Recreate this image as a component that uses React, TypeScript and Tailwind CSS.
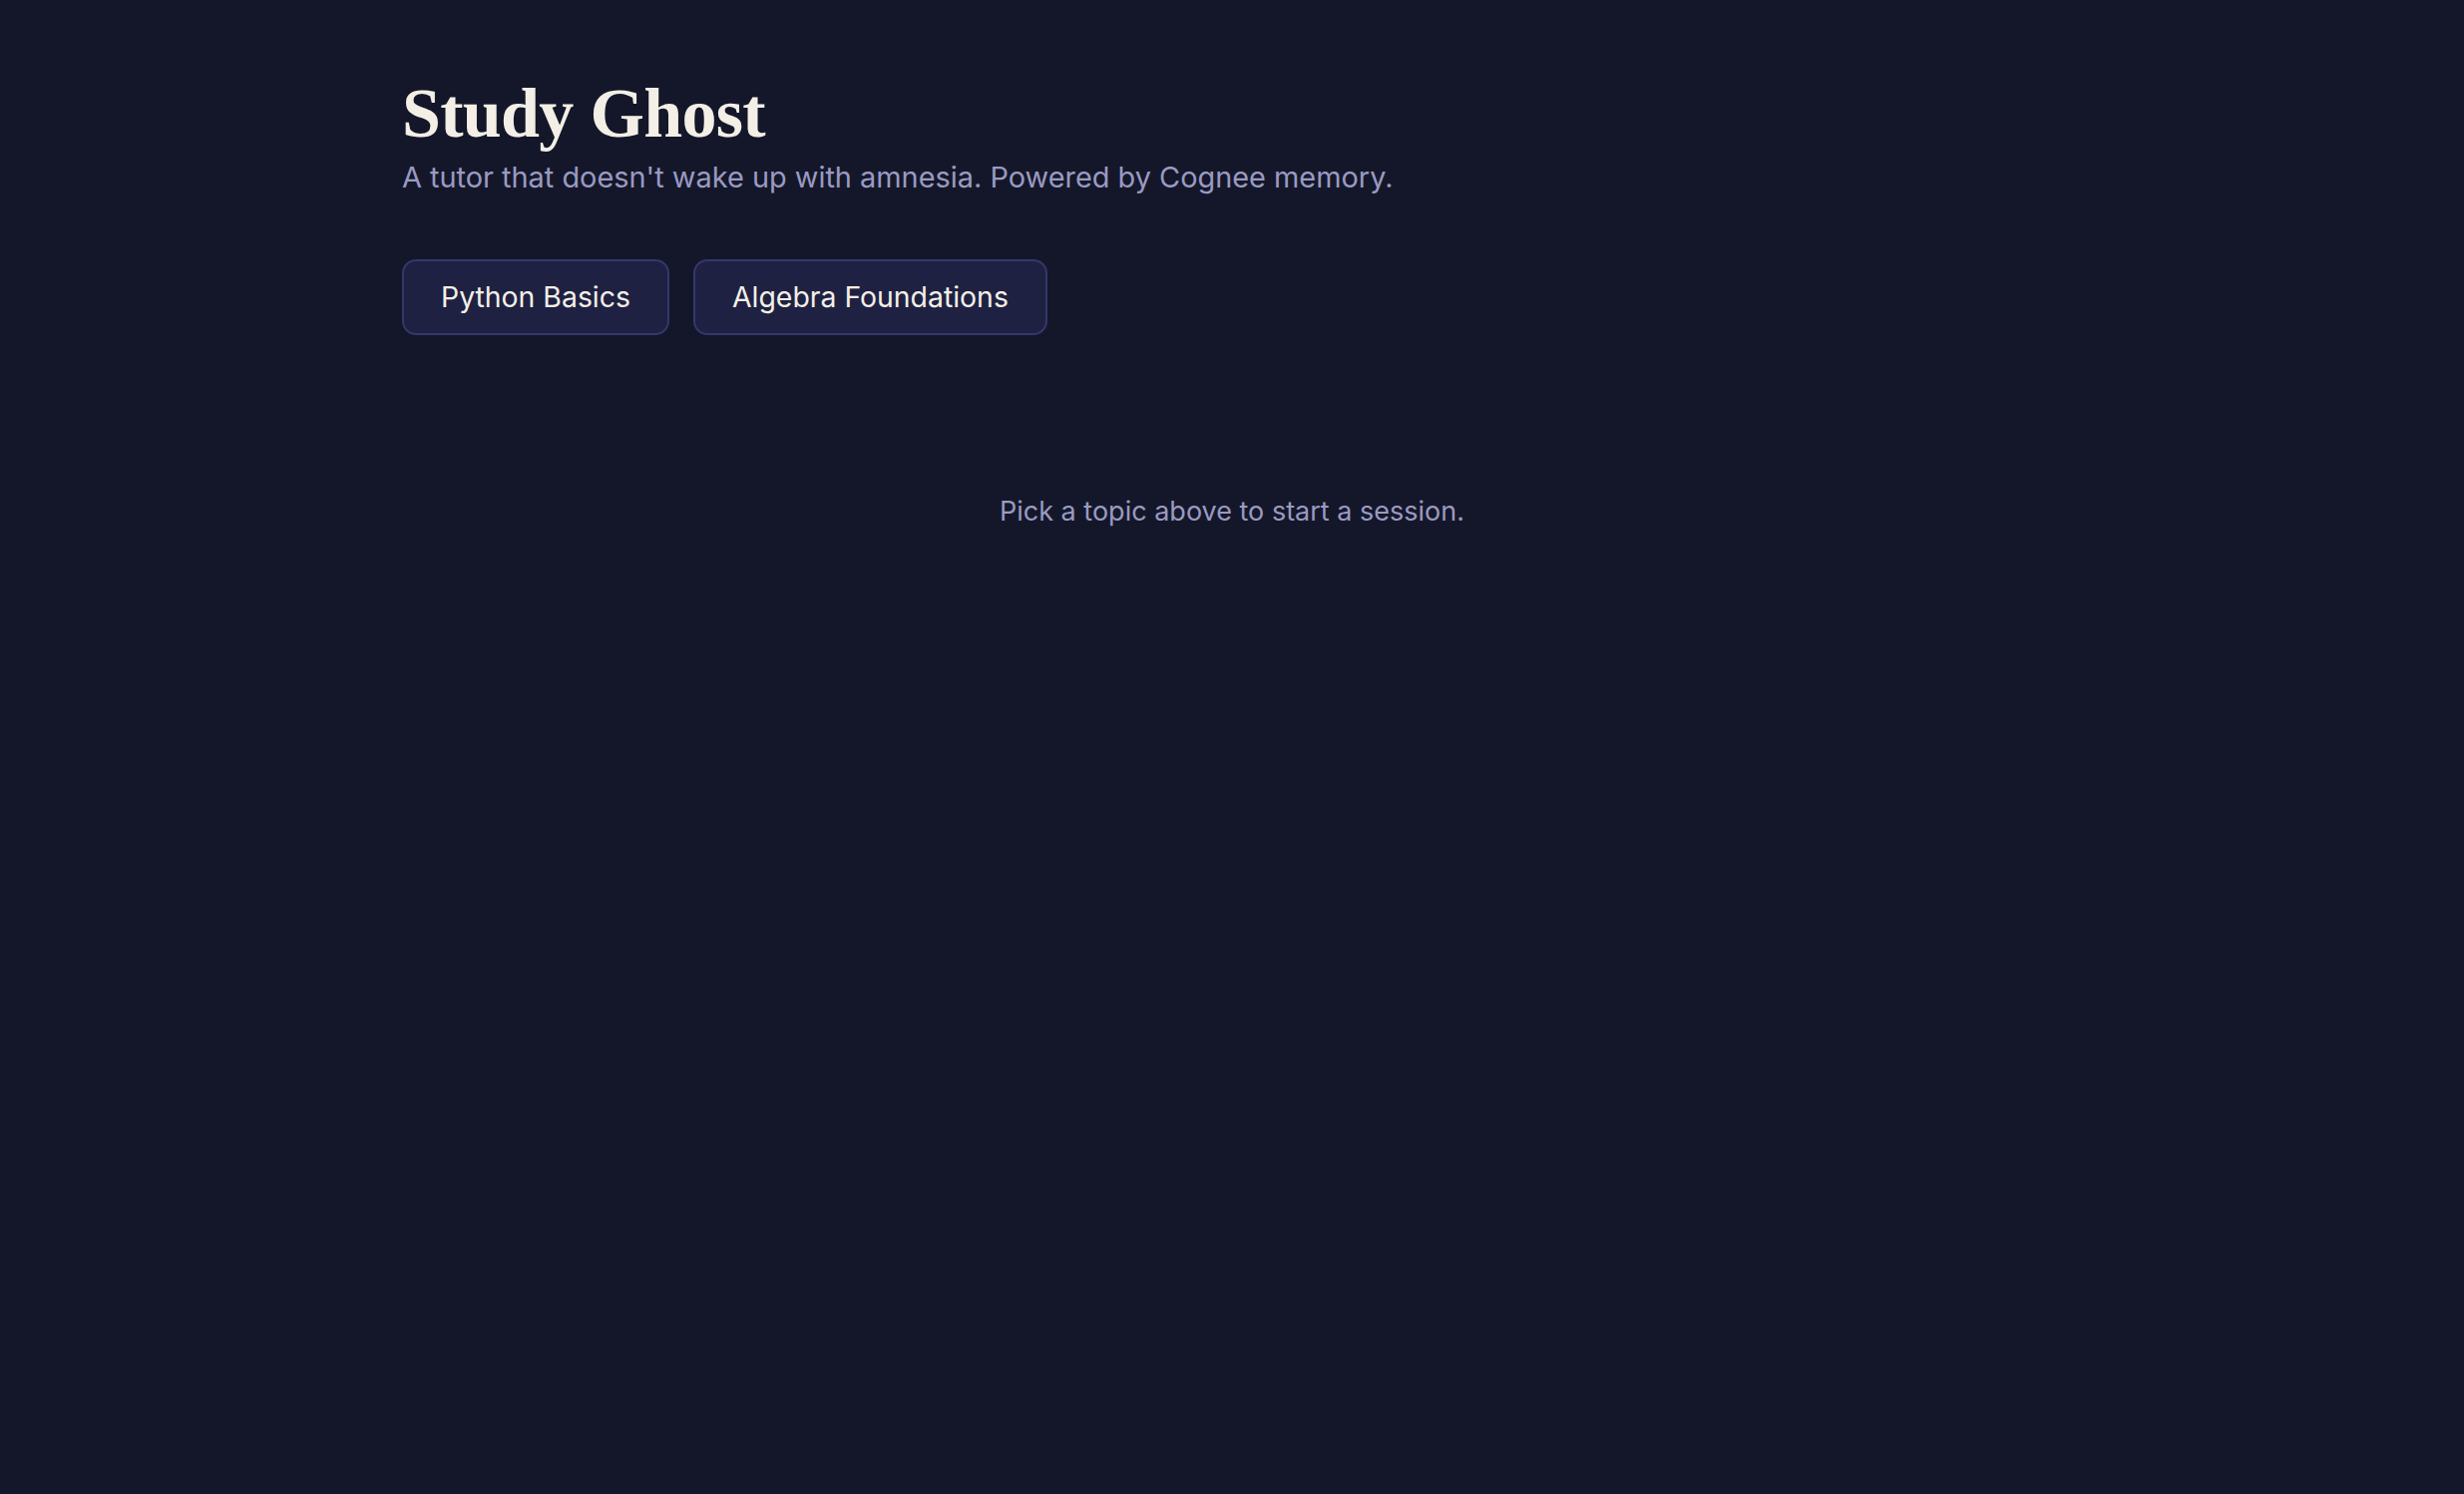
const topics = ["Python Basics", "Algebra Foundations"];

function TopicButton({ label }: { label: string }) {
  return (
    <button
      type="button"
      className="flex h-[76px] items-center rounded-[14px] border-2 border-[#35376b] bg-[#1f2142] px-[37px] text-[28.4px] leading-none text-[#f3efe7] hover:bg-[#262955]"
    >
      {label}
    </button>
  );
}

export default function App() {
  return (
    <div className="min-h-screen bg-[#141729] font-['Inter','Liberation_Sans',sans-serif]">
      <main className="mx-auto w-[1664px] pt-[75px]">
        <header>
          <h1 className="font-['Liberation_Serif',serif] text-[70px] font-bold leading-[1.1] tracking-[-0.01em] text-[#f3efe6]">
            Study Ghost
          </h1>
          <p className="mt-[6px] text-[28.9px] leading-[1.4] text-[#9a9ac2]">
            A tutor that doesn't wake up with amnesia. Powered by Cognee memory.
          </p>
        </header>

        <nav className="mt-[62px] flex gap-[24px]">
          {topics.map((t) => (
            <TopicButton key={t} label={t} />
          ))}
        </nav>

        <p className="mt-[158px] text-center text-[27px] leading-[1.4] text-[#9a9ac2]">
          Pick a topic above to start a session.
        </p>
      </main>
    </div>
  );
}
